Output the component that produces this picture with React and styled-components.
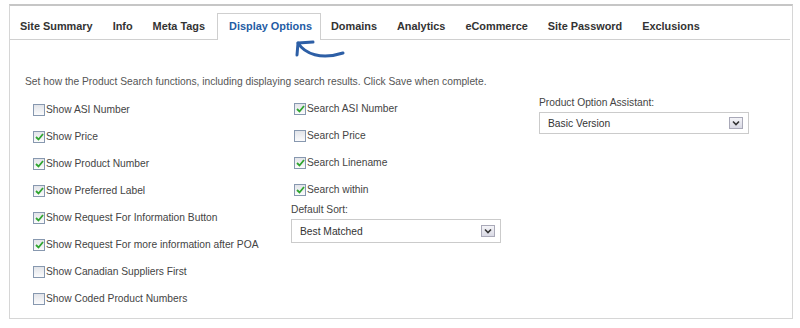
import React from 'react';
import styled, { createGlobalStyle } from 'styled-components';

const GlobalStyle = createGlobalStyle`
  html, body {
    margin: 0;
    padding: 0;
    background: #fff;
    font-family: "Liberation Sans", Arial, sans-serif;
  }
`;

const tabs = ['Site Summary', 'Info', 'Meta Tags', 'Display Options', 'Domains', 'Analytics', 'eCommerce', 'Site Password', 'Exclusions'];

const showOptions = [
  { label: 'Show ASI Number', checked: false },
  { label: 'Show Price', checked: true },
  { label: 'Show Product Number', checked: true },
  { label: 'Show Preferred Label', checked: true },
  { label: 'Show Request For Information Button', checked: true },
  { label: 'Show Request For more information after POA', checked: true },
  { label: 'Show Canadian Suppliers First', checked: false },
  { label: 'Show Coded Product Numbers', checked: false },
];

const searchOptions = [
  { label: 'Search ASI Number', checked: true },
  { label: 'Search Price', checked: false },
  { label: 'Search Linename', checked: true },
  { label: 'Search within', checked: true },
];

const Panel = styled.div`
  position: relative;
  box-sizing: border-box;
  width: 784px;
  height: 315px;
  margin: 4px 0 0 9px;
  border: 1px solid #d6d6d6;
  border-top: 2px solid #c6c6c6;
`;

const TabBar = styled.div`
  display: flex;
  padding-top: 7px;
  margin-right: 2px;
  border-bottom: 1px solid #d0d0d0;
`;

const Tab = styled.div`
  box-sizing: border-box;
  padding: ${(p) => (p.$active ? '0 8px 0 11px' : '0 10px')};
  font-size: 10.9px;
  font-weight: bold;
  color: ${(p) => (p.$active ? '#1f5ca4' : '#333')};
  background: #fff;
  border: ${(p) => (p.$active ? '1px solid #cfcfcf' : 'none')};
  border-bottom: none;
  margin: ${(p) => (p.$active ? '0 0 -1px 2px' : '0')};
  height: ${(p) => (p.$active ? '27px' : '26px')};
  line-height: ${(p) => (p.$active ? '25px' : '26px')};
  white-space: nowrap;
`;

const Arrow = styled.svg`
  position: absolute;
  left: 271px;
  top: 26px;
`;

const Content = styled.div`
  padding: 35px 0 0 15px;
`;

const Intro = styled.div`
  font-size: 10.25px;
  line-height: 14px;
  color: #555;
  margin-bottom: 7px;
`;

const Columns = styled.div`
  display: flex;
  margin-left: 5px;
`;

const Column = styled.div`
  width: ${(p) => p.$width}px;
  margin-top: ${(p) => p.$shift || 0}px;
  display: flex;
  flex-direction: column;
`;

const Row = styled.label`
  display: flex;
  align-items: center;
  height: 27px;
  font-size: 10.25px;
  color: #444;
`;

const Box = styled.span`
  box-sizing: border-box;
  width: 12px;
  height: 12px;
  margin: 0 1px 0 3px;
  border: 1px solid #8798af;
  background: linear-gradient(#e2e4e9, #fbfbfc);
  display: flex;
  align-items: center;
  justify-content: center;
`;

const FieldLabel = styled.div`
  font-size: 10.25px;
  line-height: 14px;
  color: #444;
`;

const Select = styled.div`
  box-sizing: border-box;
  width: 210px;
  height: ${(p) => p.$height}px;
  margin-top: ${(p) => p.$gap}px;
  border: 1px solid #cbcbcb;
  background: #fff;
  display: flex;
  align-items: center;
  justify-content: space-between;
  padding: 0 5px 0 8px;
  font-size: 10.25px;
  color: #333;
`;

const SelectButton = styled.span`
  box-sizing: border-box;
  width: 14px;
  height: 12px;
  border: 1px solid #a9a9b8;
  background: linear-gradient(#f4f4f8, #d9d9e4);
  display: flex;
  align-items: center;
  justify-content: center;
`;

const Check = () => (
  <svg width="9" height="8" viewBox="0 0 9 8">
    <path d="M1 4 L3.5 6.5 L8 1" fill="none" stroke="#2fa52f" strokeWidth="1.8" />
  </svg>
);

const Option = ({ label, checked }) => (
  <Row>
    <Box>{checked && <Check />}</Box>
    {label}
  </Row>
);

const Dropdown = ({ value, height, gap }) => (
  <Select $height={height} $gap={gap}>
    {value}
    <SelectButton>
      <svg width="8" height="6" viewBox="0 0 8 6">
        <path d="M1 1.5 L4 4.5 L7 1.5" fill="none" stroke="#333" strokeWidth="1.6" />
      </svg>
    </SelectButton>
  </Select>
);

export default function App() {
  return (
    <>
      <GlobalStyle />
      <Panel>
        <TabBar>
          {tabs.map((t) => (
            <Tab key={t} $active={t === 'Display Options'}>{t}</Tab>
          ))}
        </TabBar>
        <Arrow width="70" height="32" viewBox="0 0 70 32">
          <path d="M17 11 C24 22 40 28 62 21" fill="none" stroke="#2d5fa6" strokeWidth="3" strokeLinecap="round" />
          <path d="M17 11 L32 10 M17 11 L16 23" fill="none" stroke="#2d5fa6" strokeWidth="3" strokeLinecap="round" />
        </Arrow>
        <Content>
          <Intro>Set how the Product Search functions, including displaying search results. Click Save when complete.</Intro>
          <Columns>
            <Column $width={261}>
              {showOptions.map((o) => <Option key={o.label} {...o} />)}
            </Column>
            <Column $width={248} $shift={-1}>
              {searchOptions.map((o) => <Option key={o.label} {...o} />)}
              <FieldLabel>Default Sort:</FieldLabel>
              <Dropdown value="Best Matched" height={24} gap={2} />
            </Column>
            <Column $width={220}>
              <FieldLabel>Product Option Assistant:</FieldLabel>
              <Dropdown value="Basic Version" height={22} gap={2} />
            </Column>
          </Columns>
        </Content>
      </Panel>
    </>
  );
}
